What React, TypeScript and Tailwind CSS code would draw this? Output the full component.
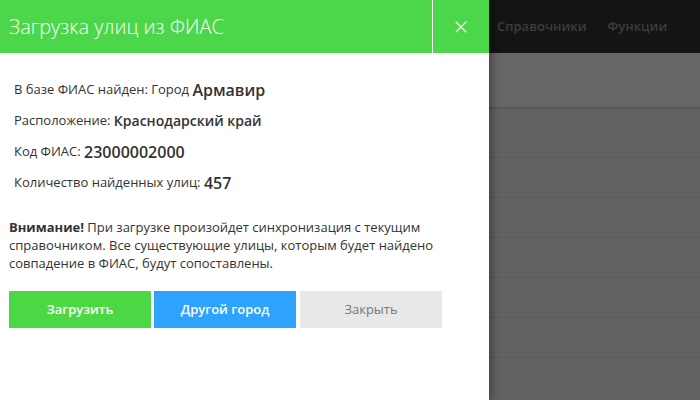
import { X } from 'lucide-react'

const rows = [0, 1, 2, 3, 4, 5]

export default function App() {
  return (
    <div
      className="relative flex w-[700px] h-[400px] overflow-hidden bg-[#626262]"
      style={{ fontFamily: '"Open Sans", "Noto Sans", sans-serif' }}
    >
      {/* side panel */}
      <div className="relative z-10 w-[489px] h-full bg-white shadow-[3px_0_8px_rgba(0,0,0,0.35)] flex flex-col">
        <div className="h-[53px] bg-[#4cd64a] flex items-stretch text-white">
          <div className="flex-1 flex items-center pl-[9px] text-[20px] font-light">
            Загрузка улиц из ФИАС
          </div>
          <div className="w-px bg-white" />
          <button className="w-[56px] flex items-center justify-center">
            <X className="w-[20px] h-[20px]" strokeWidth={1.3} />
          </button>
        </div>

        <div className="pt-[25px] pl-[14px] text-[13px] text-[#333] flex flex-col gap-[8px]">
          <p className="h-[23px] flex items-center">
            В базе ФИАС найден: Город&nbsp;<span className="text-[16px] font-semibold">Армавир</span>
          </p>
          <p className="h-[23px] flex items-center">
            Расположение:&nbsp;<span className="text-[14px] font-semibold">Краснодарский край</span>
          </p>
          <p className="h-[23px] flex items-center">
            Код ФИАС:&nbsp;<span className="text-[16px] font-semibold">23000002000</span>
          </p>
          <p className="h-[23px] flex items-center">
            Количество найденных улиц:&nbsp;<span className="text-[16px] font-semibold">457</span>
          </p>
        </div>

        <p className="mt-[24px] px-[9px] text-[13px] leading-[18px] text-[#333]">
          <b className="font-bold">Внимание!</b> При загрузке произойдет синхронизация с текущим справочником. Все
          существующие улицы, которым будет найдено совпадение в ФИАС, будут сопоставлены.
        </p>

        <div className="mt-[19px] px-[9px] flex gap-[3px] text-[13px]">
          <button className="w-[142px] h-[37px] bg-[#4cd744] text-white font-semibold">Загрузить</button>
          <button className="w-[142px] h-[37px] bg-[#2da3fd] text-white font-semibold">Другой город</button>
          <button className="ml-[1px] w-[142px] h-[37px] bg-[#e8e8e8] text-[#777]">Закрыть</button>
        </div>
      </div>

      {/* dimmed page behind */}
      <div className="flex-1 flex flex-col">
        <div className="h-[53px] bg-[#141414] flex items-center gap-[21px] pl-[8px] text-[13px] font-semibold text-[#3c3c3c]">
          <span>Справочники</span>
          <span>Функции</span>
        </div>
        <div className="h-[56px] bg-[#666] border-b-2 border-[#585858]" />
        <div className="h-[48px] bg-[#626262]" />
        {rows.map((r) => (
          <div key={r} className="h-[40px] border-t border-[#5a5a5a] bg-[#626262]" />
        ))}
      </div>
    </div>
  )
}
